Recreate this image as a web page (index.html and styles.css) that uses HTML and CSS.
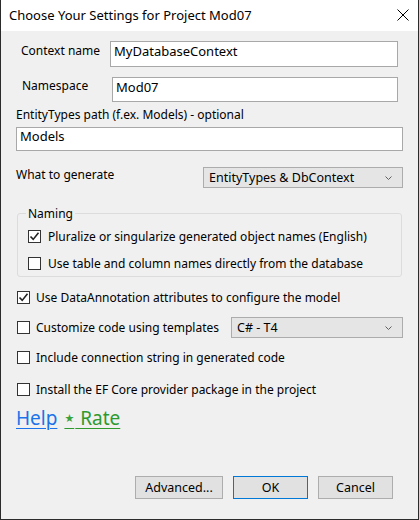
FILE: index.html
```html
<!DOCTYPE html>
<html>
<head>
<meta charset="utf-8">
<link rel="stylesheet" href="styles.css">
</head>
<body>
<div class="window">
  <div class="titlebar">
    <span class="title">Choose Your Settings for Project Mod07</span>
    <svg class="close" width="12" height="12" viewBox="0 0 12 12"><path d="M0.5 0.5 L11.5 11.5 M11.5 0.5 L0.5 11.5" stroke="#000" stroke-width="1" fill="none"/></svg>
  </div>
  <div class="content">
    <div class="row row-context">
      <span class="label label-context">Context name</span>
      <div class="textbox tb-context">MyDatabaseContext</div>
    </div>
    <div class="row row-ns">
      <span class="label label-ns">Namespace</span>
      <div class="textbox tb-ns">Mod07</div>
    </div>
    <div class="path-label">EntityTypes path (f.ex. Models) - optional</div>
    <div class="textbox tb-path">Models</div>
    <div class="row row-gen">
      <span class="label label-gen">What to generate</span>
      <div class="combo combo-gen"><span>EntityTypes &amp; DbContext</span><svg class="chev" width="7" height="4" viewBox="0 0 7 4"><path d="M0.5 0.5 L3.5 3.5 L6.5 0.5" stroke="#606060" fill="none"/></svg></div>
    </div>
    <fieldset class="group">
      <legend>Naming</legend>
      <div class="check-row">
        <span class="cb checked"><svg width="11" height="11" viewBox="0 0 11 11"><path d="M1.5 5.5 L4.2 8.4 L9.5 1.8" stroke="#222" stroke-width="1.6" fill="none"/></svg></span>
        <span class="cb-label">Pluralize or singularize generated object names (English)</span>
      </div>
      <div class="check-row">
        <span class="cb"></span>
        <span class="cb-label">Use table and column names directly from the database</span>
      </div>
    </fieldset>
    <div class="check-row outer r-annot">
      <span class="cb checked"><svg width="11" height="11" viewBox="0 0 11 11"><path d="M1.5 5.5 L4.2 8.4 L9.5 1.8" stroke="#222" stroke-width="1.6" fill="none"/></svg></span>
      <span class="cb-label">Use DataAnnotation attributes to configure the model</span>
    </div>
    <div class="check-row outer r-custom">
      <span class="cb"></span>
      <span class="cb-label">Customize code using templates</span>
      <div class="combo combo-t4"><span>C# - T4</span><svg class="chev" width="7" height="4" viewBox="0 0 7 4"><path d="M0.5 0.5 L3.5 3.5 L6.5 0.5" stroke="#606060" fill="none"/></svg></div>
    </div>
    <div class="check-row outer r-include">
      <span class="cb"></span>
      <span class="cb-label">Include connection string in generated code</span>
    </div>
    <div class="check-row outer r-install">
      <span class="cb"></span>
      <span class="cb-label">Install the EF Core provider package in the project</span>
    </div>
    <div class="links">
      <a class="help" href="#">Help</a>
      <a class="rate" href="#"><span class="star">&#9733;</span> Rate</a>
    </div>
    <div class="buttons">
      <button class="btn btn-adv">Advanced...</button>
      <button class="btn btn-ok">OK</button>
      <button class="btn btn-cancel">Cancel</button>
    </div>
  </div>
</div>
</body>
</html>
```

FILE: styles.css
```css
* { box-sizing: border-box; }
html, body { margin: 0; padding: 0; }
body {
  width: 419px;
  height: 520px;
  font-family: "Noto Sans", "DejaVu Sans", sans-serif;
  font-size: 12px;
  color: #000;
  background: #f0f0f0;
}
.window {
  width: 419px;
  height: 520px;
  border-left: 1px solid #2b2b2b;
  border-right: 1px solid #2b2b2b;
  border-bottom: 1px solid #2b2b2b;
  background: #f0f0f0;
  display: flex;
  flex-direction: column;
}
.titlebar {
  height: 31px;
  background: #fff;
  display: flex;
  align-items: center;
  justify-content: space-between;
  padding: 0 9px 0 8px;
  flex-shrink: 0;
}
.title {
  font-size: 13px;
  line-height: 17px;
}
.close { display: block; margin-top: -2px; }
.content {
  flex: 1;
  display: flex;
  flex-direction: column;
  padding: 0 15px 0 15px;
}
.row { display: flex; align-items: flex-start; }
.label { line-height: 17px; white-space: nowrap; }
.textbox {
  background: #fff;
  border: 1px solid #a8a8a8;
  font-size: 13px;
  line-height: 17px;
  padding: 1px 3px;
}
.row-context { margin-top: 10px; height: 26px; }
.label-context { margin-left: 5px; margin-top: 1px; }
.tb-context { margin-left: auto; width: 288px; height: 26px; margin-right: 5px; }
.row-ns { margin-top: 10px; height: 25px; }
.label-ns { margin-left: 6px; margin-top: 0px; }
.tb-ns { margin-left: auto; width: 286px; height: 25px; margin-right: 5px; padding-left: 3px; }
.path-label { margin-top: 4px; line-height: 17px; height: 19px; }
.tb-path { margin-top: 2px; height: 24px; padding-top: 0px; }
.row-gen { margin-top: 16px; height: 21px; justify-content: space-between; }
.label-gen { margin-top: -1px; }
.combo {
  height: 21px;
  background: #e5e5e5;
  border: 1px solid #acacac;
  display: flex;
  align-items: center;
  justify-content: space-between;
  padding: 0 10px 0 5px;
  font-size: 12.5px;
}
.combo span { line-height: 17px; }
.combo-gen { width: 200px; }
.combo-t4 { width: 172px; margin-left: auto; }
.chev { display: block; }
.group {
  margin: 17px 1px 0 1px;
  padding: 4px 0 0 10px;
  border: 1px solid #dcdcdc;
  border-radius: 3px;
  height: 72px;
  min-width: 0;
}
.group legend {
  padding: 0 2px;
  margin-left: -2px;
  line-height: 17px;
  font-size: 12px;
}
.check-row {
  display: flex;
  align-items: center;
  height: 20px;
}
.group .check-row + .check-row { margin-top: 7.5px; }
.cb {
  width: 13px;
  height: 13px;
  background: #fff;
  border: 1px solid #333;
  flex-shrink: 0;
  display: flex;
  align-items: center;
  justify-content: center;
}
.cb svg { display: block; }
.cb-label { margin-left: 7px; line-height: 17px; white-space: nowrap; }
.outer { padding-left: 1px; }
.outer .cb-label { margin-left: 6px; }
.r-annot { margin-top: 10px; }
.r-custom { margin-top: 10px; height: 21px; }
.r-include { margin-top: 9px; }
.r-install { margin-top: 12px; }
.links {
  margin-top: 7px;
  display: flex;
  align-items: baseline;
  gap: 5px;
  font-size: 19px;
  line-height: 24px;
}
.links a { text-decoration: underline; text-underline-offset: 3px; text-decoration-thickness: 1px; }
.help { color: #1a73e8; }
.rate { color: #2e9a2e; }
.star { font-size: 11px; color: #3aa23a; vertical-align: 3px; margin-left: 2px; margin-right: 1px; }
.buttons {
  margin-top: auto;
  margin-bottom: 20px;
  display: flex;
  justify-content: flex-end;
  gap: 10px;
  padding-right: 10px;
}
.btn {
  height: 23px;
  background: #e1e1e1;
  border: 1px solid #adadad;
  font-family: "Noto Sans", "DejaVu Sans", sans-serif;
  font-size: 12.5px;
  color: #000;
  padding: 0;
  line-height: 17px;
}
.btn-adv { width: 88px; }
.btn-ok { width: 75px; border-color: #0078d7; }
.btn-cancel { width: 75px; }
```
